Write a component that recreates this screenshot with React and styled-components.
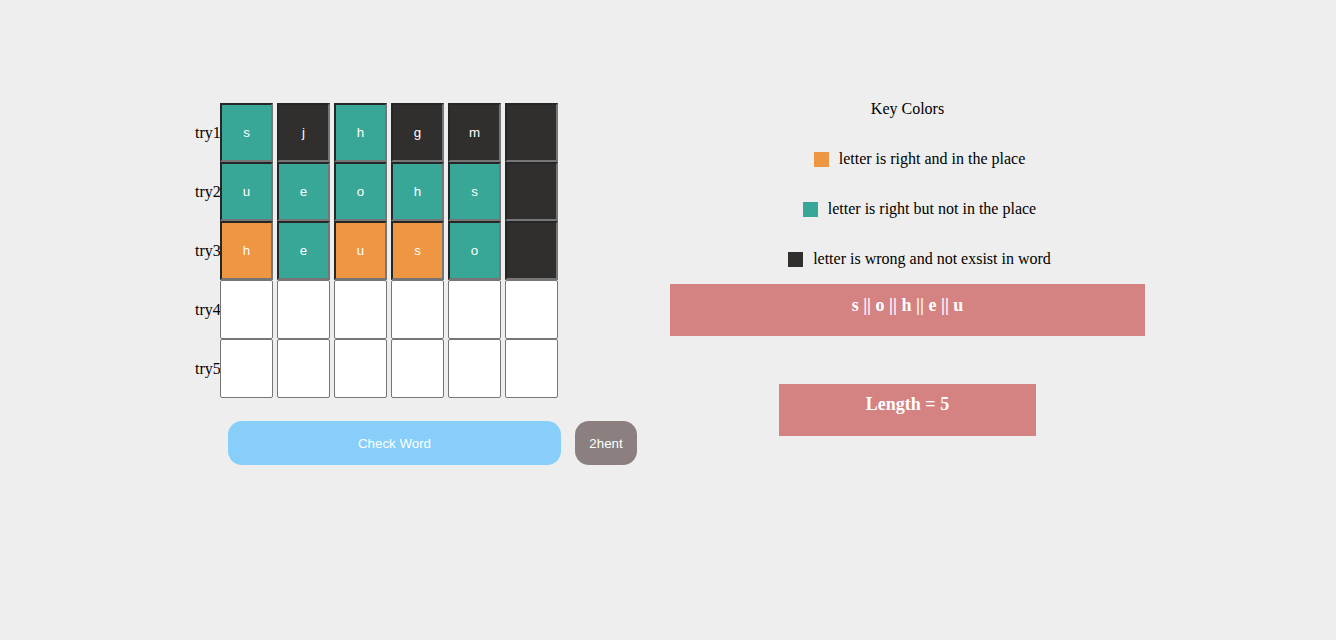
import React from "react";
import styled, { createGlobalStyle } from "styled-components";

const Global = createGlobalStyle`
  html, body { margin: 0; padding: 0; background: #eeeeee; }
  body { font-family: "Liberation Serif", "Times New Roman", serif; font-size: 16px; color: #000; }
`;

const COLORS = {
  green: "#38a797",
  dark: "#312f2d",
  orange: "#ee9642",
};

const Page = styled.div`
  width: 1336px;
  height: 640px;
  box-sizing: border-box;
  padding: 100px 0 0 195px;
  display: grid;
  grid-template-columns: 475px 475px;
  align-items: start;
`;

const LeftCol = styled.div`
  margin-top: 3px;
  display: flex;
  flex-direction: column;
`;

const Board = styled.div`
  display: flex;
  flex-direction: column;
`;

const Row = styled.div`
  display: flex;
  align-items: center;
  height: 59px;
`;

const Label = styled.span`
  width: 25px;
  font-size: 16px;
  line-height: 18px;
`;

const Cells = styled.div`
  display: flex;
  gap: 4px;
`;

const Cell = styled.div`
  box-sizing: border-box;
  width: 53px;
  height: 59px;
  display: flex;
  align-items: center;
  justify-content: center;
  font-family: "Liberation Sans", Arial, sans-serif;
  font-size: 13.33px;
  color: #fff;
  background: ${(p) => (p.$color ? COLORS[p.$color] : "#fff")};
  border-style: solid;
  border-width: ${(p) => (p.$color ? "2px" : "1px")};
  border-color: ${(p) =>
    p.$color ? "#262626 #767676 #767676 #262626" : "#767676"};
  border-radius: ${(p) => (p.$color ? "0" : "2px")};
`;

const Buttons = styled.div`
  display: flex;
  gap: 14px;
  margin: 23px 0 0 33px;
`;

const Button = styled.button`
  height: 44px;
  width: ${(p) => p.$w}px;
  border: none;
  border-radius: 14px;
  background: ${(p) => p.$bg};
  color: #fff;
  font-family: "Liberation Sans", Arial, sans-serif;
  font-size: 13.33px;
  padding: 0;
  cursor: pointer;
`;

const RightCol = styled.div`
  display: flex;
  flex-direction: column;
  align-items: center;
`;

const Title = styled.div`
  line-height: 18px;
  margin-bottom: 32px;
`;

const Legend = styled.div`
  display: flex;
  align-items: center;
  gap: 10px;
  line-height: 18px;
  margin-bottom: ${(p) => (p.$last ? 16 : 32)}px;
  padding-left: 24px;
`;

const Swatch = styled.span`
  width: 15px;
  height: 15px;
  background: ${(p) => COLORS[p.$color]};
`;

const Banner = styled.div`
  box-sizing: border-box;
  width: ${(p) => p.$w}px;
  height: 52px;
  padding-top: ${(p) => p.$pt}px;
  background: #d58282;
  color: #fff;
  font-weight: bold;
  font-size: 18px;
  line-height: 20px;
  text-align: center;
  margin-bottom: ${(p) => p.$mb || 0}px;
`;

const rows = [
  { label: "try1", cells: [["s", "green"], ["j", "dark"], ["h", "green"], ["g", "dark"], ["m", "dark"], ["", "dark"]] },
  { label: "try2", cells: [["u", "green"], ["e", "green"], ["o", "green"], ["h", "green"], ["s", "green"], ["", "dark"]] },
  { label: "try3", cells: [["h", "orange"], ["e", "green"], ["u", "orange"], ["s", "orange"], ["o", "green"], ["", "dark"]] },
  { label: "try4", cells: Array(6).fill(["", null]) },
  { label: "try5", cells: Array(6).fill(["", null]) },
];

export default function App() {
  return (
    <>
      <Global />
      <Page>
        <LeftCol>
          <Board>
            {rows.map((r) => (
              <Row key={r.label}>
                <Label>{r.label}</Label>
                <Cells>
                  {r.cells.map(([ch, c], i) => (
                    <Cell key={i} $color={c}>{ch}</Cell>
                  ))}
                </Cells>
              </Row>
            ))}
          </Board>
          <Buttons>
            <Button $w={333} $bg="#87cefa">Check Word</Button>
            <Button $w={62} $bg="#8b7f7f">2hent</Button>
          </Buttons>
        </LeftCol>
        <RightCol>
          <Title>Key Colors</Title>
          <Legend>
            <Swatch $color="orange" />
            letter is right and in the place
          </Legend>
          <Legend>
            <Swatch $color="green" />
            letter is right but not in the place
          </Legend>
          <Legend $last>
            <Swatch $color="dark" />
            letter is wrong and not exsist in word
          </Legend>
          <Banner $w={475} $pt={11} $mb={48}>s || o || h || e || u</Banner>
          <Banner $w={257} $pt={10}>Length = 5</Banner>
        </RightCol>
      </Page>
    </>
  );
}
